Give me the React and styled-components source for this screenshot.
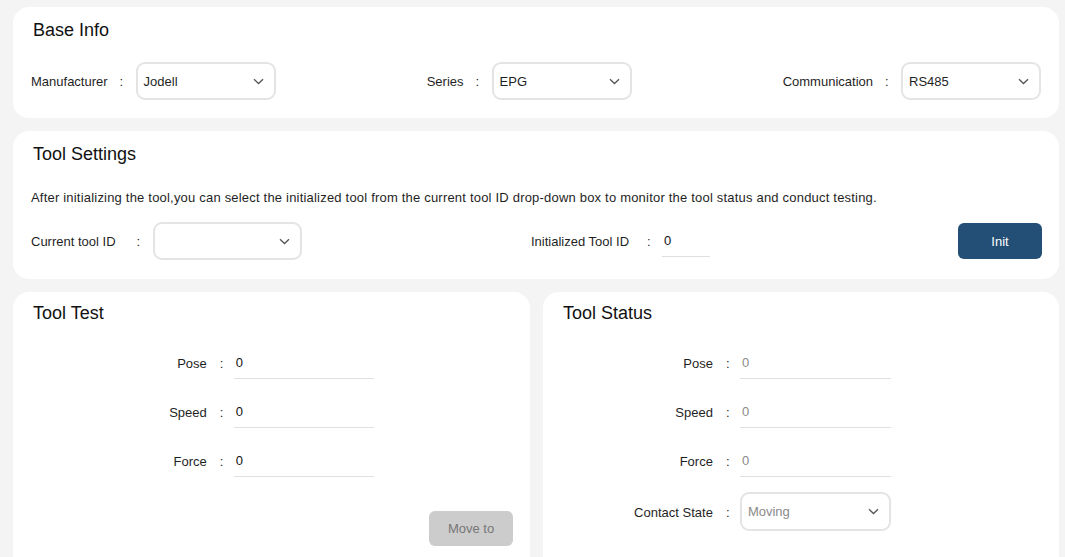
import React from "react";
import styled, { createGlobalStyle } from "styled-components";

const GlobalStyle = createGlobalStyle`
  html, body {
    margin: 0;
    padding: 0;
    background: #f4f4f4;
    font-family: "Liberation Sans", Arial, sans-serif;
    color: #1f1f1f;
    overflow: hidden;
  }
`;

export const Page = styled.div`
  display: flex;
  flex-direction: column;
  gap: 13px;
  padding: 7px 6px 0 13px;
  height: 557px;
  box-sizing: border-box;
`;

export const Card = styled.section`
  background: #fff;
  border-radius: 16px;
  padding: ${(p) => p.pt || 11}px 18px ${(p) => p.pb || 18}px 18px;
  box-sizing: border-box;
  min-height: ${(p) => p.minH || "auto"};
`;

export const Title = styled.h2`
  margin: 0 0 0 2px;
  font-size: 18px;
  font-weight: 400;
  line-height: 24px;
  color: #111;
`;

export const InfoRow = styled.div`
  display: flex;
  justify-content: space-between;
  align-items: center;
  margin-top: 20px;
`;

export const Field = styled.div`
  display: flex;
  align-items: center;
`;

export const Label = styled.span`
  font-size: 13px;
  color: #1f1f1f;
  white-space: nowrap;
`;

export const Colon = styled.span`
  font-size: 13px;
  width: ${(p) => p.w || 28}px;
  padding-left: ${(p) => p.pl || 12}px;
  box-sizing: border-box;
`;

export const SelectBox = styled.div`
  display: flex;
  align-items: center;
  justify-content: space-between;
  width: ${(p) => p.w}px;
  height: ${(p) => p.h || 38}px;
  margin-top: ${(p) => p.mt || 0}px;
  border: 2px solid #e4e4e4;
  border-radius: 9px;
  box-sizing: border-box;
  padding: 0 10px 0 6px;
  font-size: 13px;
  color: ${(p) => (p.muted ? "#8a8a8a" : "#1f1f1f")};
  background: #fff;
`;

export const Description = styled.p`
  margin: 23px 0 0 0;
  font-size: 13px;
  line-height: 18px;
  letter-spacing: 0.2px;
  color: #1f1f1f;
`;

export const SettingsRow = styled.div`
  display: grid;
  grid-template-columns: 500px 1fr auto;
  align-items: center;
  margin-top: 15px;
`;

export const LineInput = styled.div`
  width: ${(p) => p.w}px;
  height: 32px;
  display: flex;
  align-items: center;
  padding-left: 2px;
  box-sizing: border-box;
  border-bottom: 1px solid #e0e0e0;
  font-size: 13px;
  color: ${(p) => (p.muted ? "#8a8a8a" : "#111")};
`;

export const PrimaryButton = styled.button`
  width: 84px;
  height: 36px;
  margin-right: -1px;
  border: none;
  border-radius: 6px;
  background: #234e75;
  color: #fff;
  font-family: inherit;
  font-size: 13px;
`;

export const Columns = styled.div`
  display: grid;
  grid-template-columns: 517px 516px;
  gap: 13px;
`;

export const Form = styled.div`
  display: grid;
  grid-template-columns: auto auto auto;
  justify-content: center;
  row-gap: 17px;
  align-items: center;
  margin-top: 22px;
  padding-right: ${(p) => p.shift || 0}px;
`;

export const FormLabel = styled(Label)`
  text-align: right;
`;

export const ButtonBar = styled.div`
  display: flex;
  justify-content: flex-end;
  margin-top: 34px;
  margin-right: -1px;
`;

export const GhostButton = styled.button`
  width: 84px;
  height: 35px;
  border: none;
  border-radius: 6px;
  background: #cccccc;
  color: #777;
  font-family: inherit;
  font-size: 13px;
`;

const Chevron = () => (
  <svg width="11" height="7" viewBox="0 0 11 7">
    <path d="M1 1.2 L5.5 5.5 L10 1.2" fill="none" stroke="#555" strokeWidth="1.3" />
  </svg>
);

const Select = ({ value, w, h, mt, muted }) => (
  <SelectBox w={w} h={h} mt={mt} muted={muted}>
    <span>{value}</span>
    <Chevron />
  </SelectBox>
);

const FormField = ({ label, value, w, muted }) => (
  <>
    <FormLabel>{label}</FormLabel>
    <Colon w={27} pl={13}>:</Colon>
    <LineInput w={w} muted={muted}>{value}</LineInput>
  </>
);

export default function App() {
  return (
    <>
      <GlobalStyle />
      <Page>
        <Card>
          <Title>Base Info</Title>
          <InfoRow>
            <Field>
              <Label>Manufacturer</Label>
              <Colon>:</Colon>
              <Select value="Jodell" w={140} />
            </Field>
            <Field>
              <Label>Series</Label>
              <Colon>:</Colon>
              <Select value="EPG" w={140} />
            </Field>
            <Field>
              <Label>Communication</Label>
              <Colon>:</Colon>
              <Select value="RS485" w={140} />
            </Field>
          </InfoRow>
        </Card>

        <Card pb={19}>
          <Title>Tool Settings</Title>
          <Description>
            After initializing the tool,you can select the initialized tool from the current tool ID
            drop-down box to monitor the tool status and conduct testing.
          </Description>
          <SettingsRow>
            <Field>
              <Label>Current tool ID</Label>
              <Colon w={37} pl={21}>:</Colon>
              <Select value="" w={149} />
            </Field>
            <Field>
              <Label>Initialized Tool ID</Label>
              <Colon w={33} pl={18}>:</Colon>
              <LineInput w={48}>0</LineInput>
            </Field>
            <PrimaryButton>Init</PrimaryButton>
          </SettingsRow>
        </Card>

        <Columns>
          <Card minH="300px" pt={9}>
            <Title>Tool Test</Title>
            <Form>
              <FormField label="Pose" value="0" w={140} />
              <FormField label="Speed" value="0" w={140} />
              <FormField label="Force" value="0" w={140} />
            </Form>
            <ButtonBar>
              <GhostButton>Move to</GhostButton>
            </ButtonBar>
          </Card>
          <Card minH="300px" pt={9}>
            <Title>Tool Status</Title>
            <Form shift={77}>
              <FormField label="Pose" value="0" w={151} muted />
              <FormField label="Speed" value="0" w={151} muted />
              <FormField label="Force" value="0" w={151} muted />
              <FormLabel>Contact State</FormLabel>
              <Colon w={27} pl={13}>:</Colon>
              <Select value="Moving" w={151} h={39} mt={-2} muted />
            </Form>
          </Card>
        </Columns>
      </Page>
    </>
  );
}
